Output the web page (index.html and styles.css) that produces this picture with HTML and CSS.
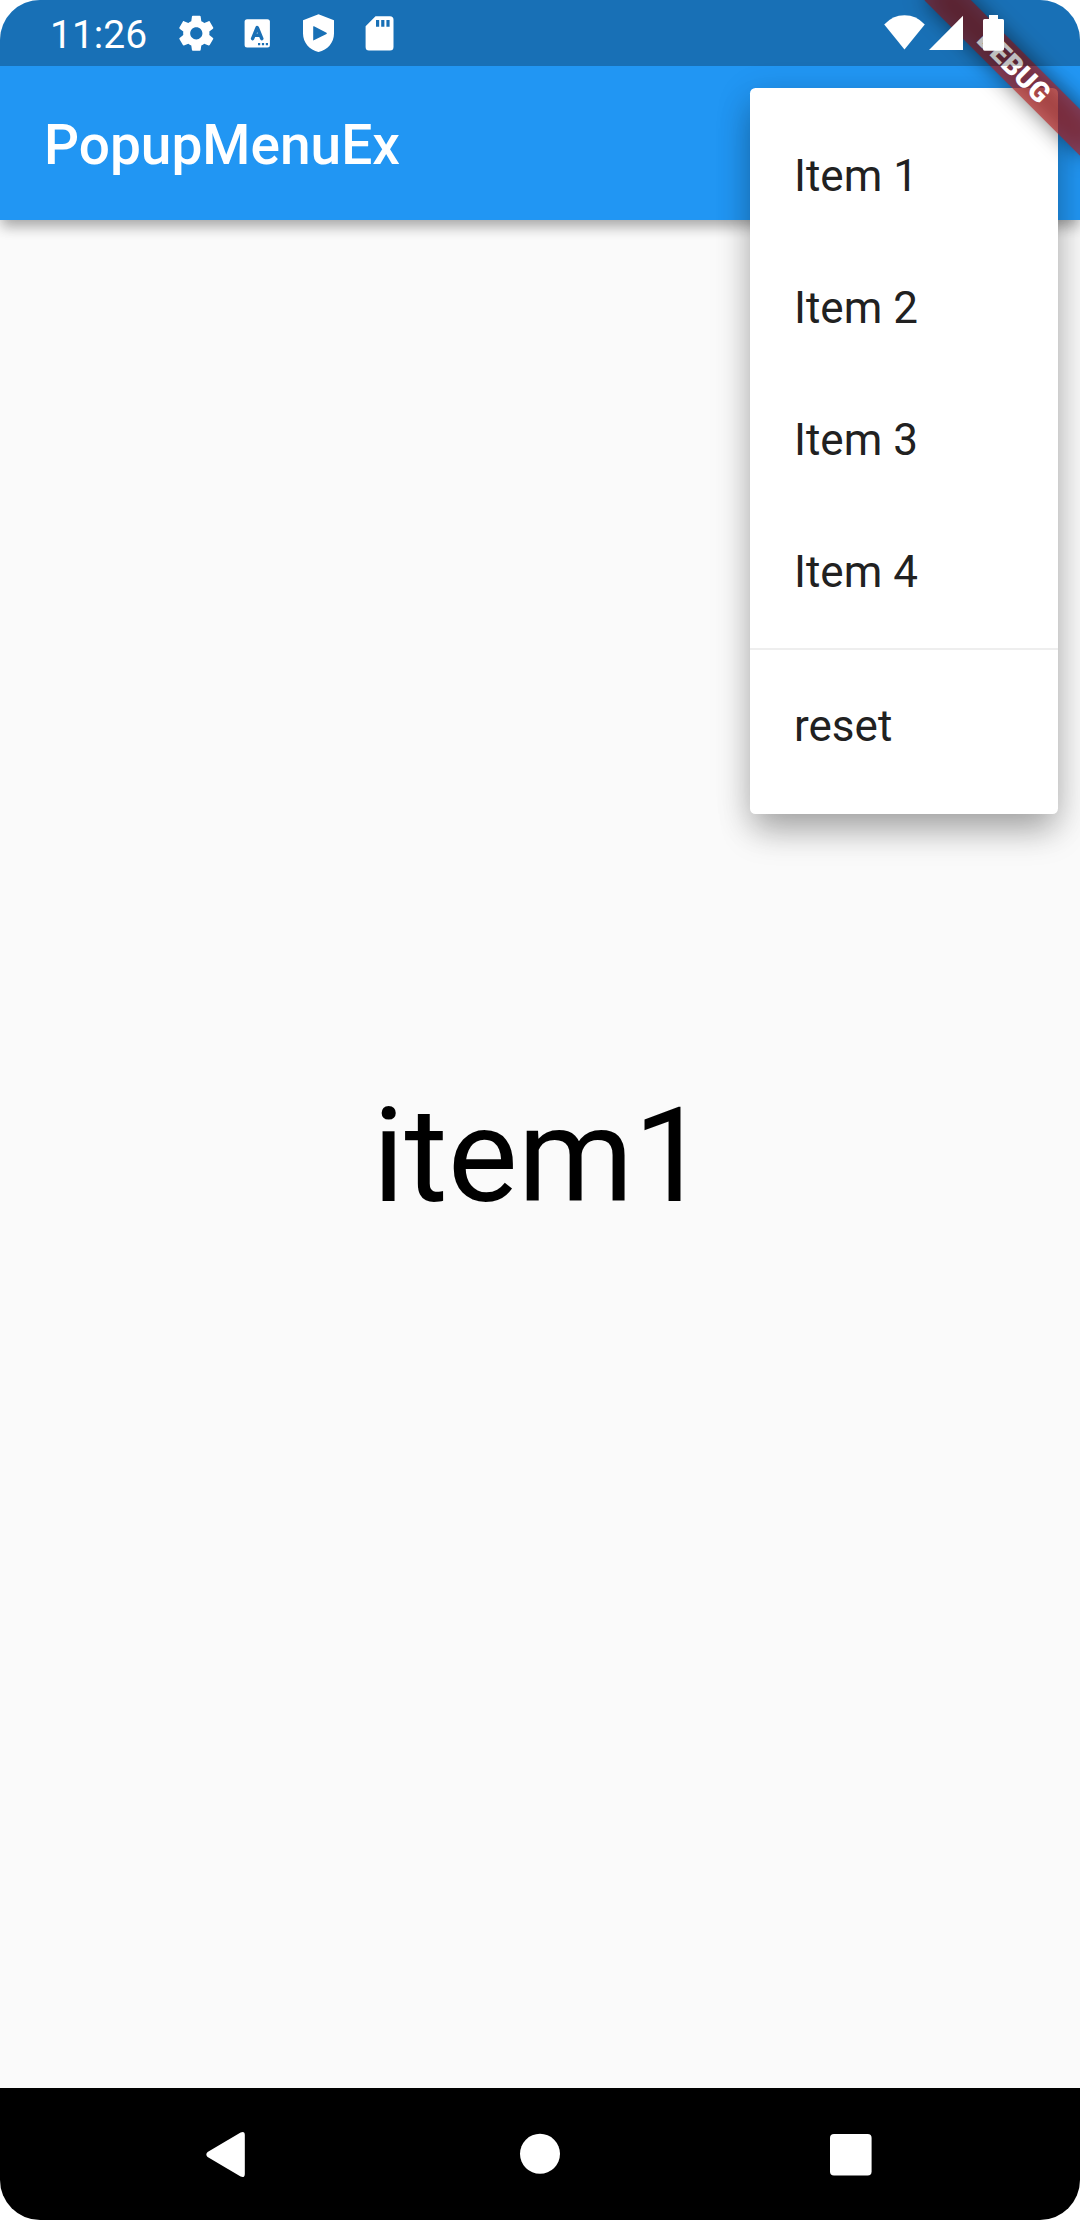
FILE: index.html
```html
<!DOCTYPE html>
<html lang="en">
<head>
<meta charset="utf-8">
<title>PopupMenuEx</title>
<link rel="stylesheet" href="styles.css">
</head>
<body>
<div class="screen">
  <header class="app-bar"><h1 class="app-title">PopupMenuEx</h1></header>
  <main class="content"><p class="selection">item1</p></main>
  <nav class="nav-bar">
    <svg class="nav-icon" viewBox="0 0 60 60"><path d="M7.600 28 40.600 8.600Q44.800 6.800 44.800 11V50Q44.800 54.300 40.600 52.600L7.600 33Q5 30.500 7.600 28Z"/></svg>
    <svg class="nav-icon" viewBox="0 0 60 60"><circle cx="30" cy="29.800" r="20"/></svg>
    <svg class="nav-icon" viewBox="0 0 60 60"><rect x="10" y="10" width="41.600" height="41.600" rx="4"/></svg>
  </nav>

  <div class="menu" role="menu">
    <div class="menu-item" role="menuitem">Item 1</div>
    <div class="menu-item" role="menuitem">Item 2</div>
    <div class="menu-item" role="menuitem">Item 3</div>
    <div class="menu-item" role="menuitem">Item 4</div>
    <div class="menu-divider"></div>
    <div class="menu-item" role="menuitem">reset</div>
  </div>

  <div class="banner">DEBUG</div>

  <div class="status-bar">
    <span class="clock">11:26</span>
    <div class="notifications">
      <svg class="note-icon" viewBox="0 0 42 42"><g transform="translate(.3 .3) scale(1.75)"><path d="M19.430 12.980c.04-.32.07-.64.07-.98s-.03-.66-.07-.98l2.110-1.650c.19-.15.24-.42.12-.64l-2-3.460c-.12-.22-.39-.3-.61-.22l-2.490 1c-.52-.4-1.080-.73-1.690-.98l-.38-2.650C14.460 2.180 14.250 2 14 2h-4c-.25 0-.46.18-.49.42l-.38 2.650c-.61.25-1.170.59-1.690.98l-2.490-1c-.23-.09-.49 0-.61.22l-2 3.460c-.13.22-.07.49.12.64l2.110 1.650c-.04.32-.07.65-.07.98s.03.66.07.98l-2.110 1.650c-.19.15-.24.42-.12.64l2 3.460c.12.22.39.3.61.22l2.490-1c.52.4 1.080.73 1.690.98l.38 2.650c.03.24.24.42.49.42h4c.25 0 .46-.18.49-.42l.38-2.650c.61-.25 1.170-.59 1.690-.98l2.490 1c.23.09.49 0 .61-.22l2-3.460c.12-.22.07-.49-.12-.64l-2.110-1.650zM12 15.500c-1.930 0-3.500-1.570-3.500-3.500s1.570-3.500 3.500-3.500 3.500 1.570 3.500 3.500-1.570 3.500-3.500 3.500z"/></g></svg>
      <svg class="note-icon" viewBox="0 0 42 42"><rect x="8.600" y="7.200" width="25.300" height="28.300" rx="2.500"/><path class="cut-line" d="M16.600 26.600 21.200 15.500 25.800 26.600M18.500 23.200H24"/><path class="cut" d="M22 31h2.200v2.200H22zM25.900 31h2.200v2.200h-2.200zM29.800 31H32v2.200h-2.200z"/></svg>
      <svg class="note-icon" viewBox="0 0 42 42"><path fill-rule="evenodd" d="M21.500 2.300 37 8.200V21.500C37 30.500 30.500 38 21.500 40 12.500 38 6 30.500 6 21.500V8.200ZM16.200 14.400V28.200Q16.200 28.600 16.800 28.300L29.500 22Q30.300 21.300 29.500 20.700L17 14.200Q16.200 14 16.200 14.400Z"/></svg>
      <svg class="note-icon" viewBox="0 0 42 42"><path fill-rule="evenodd" d="M17.500 4.300H32Q35.500 4.300 35.500 7.800V35Q35.500 38.500 32 38.500H11Q7.600 38.500 7.600 35V14.300ZM18 8V14.700H21.200V8ZM23.200 8V14.700H26.400V8ZM28.400 8V14.700H31.600V8Z"/></svg>
    </div>
    <div class="system">
      <svg class="wifi" viewBox="0 0 41 36"><path d="M0.200 9.500Q8.500.2 20.500.2T40.800 9.500L20.500 34.500Z"/></svg>
      <svg class="signal" viewBox="0 0 34 36"><path d="M34 .7V35H0Z"/></svg>
      <svg class="battery" viewBox="0 0 21 36"><path d="M6 0H15V4H19.500Q21 4 21 5.500V34Q21 35.700 19.300 35.700H1.700Q0 35.700 0 34V5.500Q0 4 1.500 4H6Z"/></svg>
    </div>
  </div>
</div>
</body>
</html>
```
FILE: styles.css
```css
body {
  margin: 0;
  background: #fff;
  font-family: Roboto, sans-serif;
}

.screen {
  position: relative;
  display: flex;
  flex-direction: column;
  width: 1080px;
  height: 2220px;
  overflow: hidden;
  border-radius: 40px;
  background: #fafafa;
}

.app-bar {
  z-index: 1;
  box-sizing: border-box;
  display: flex;
  align-items: center;
  height: 220px;
  padding: 70px 44px 0;
  background: #2196f3;
  box-shadow: 0 9px 12px -2px rgba(0, 0, 0, .24), 0 3px 16px rgba(0, 0, 0, .14);
}

.app-title {
  margin: 0;
  color: #fff;
  font-size: 55px;
  font-weight: 500;
  line-height: 64px;
}

.content {
  flex: 1;
  display: flex;
  align-items: center;
  justify-content: center;
  padding-top: 4px;
}

.selection {
  margin: 0;
  color: #000;
  font-size: 132px;
  line-height: 155px;
}

.nav-bar {
  display: flex;
  align-items: center;
  justify-content: center;
  gap: 250px;
  height: 132px;
  background: #000;
}

.nav-icon {
  width: 60px;
  height: 60px;
  fill: #fff;
}

/* Popup menu, floating over the app bar and the content */
.menu {
  position: absolute;
  z-index: 2;
  top: 88px;
  right: 22px;
  box-sizing: border-box;
  width: 308px;
  padding: 22px 0;
  border-radius: 5.5px;
  background: #fff;
  box-shadow: 0 20px 34px -4px rgba(0, 0, 0, .26), 0 8px 36px rgba(0, 0, 0, .16);
}

.menu-item {
  display: flex;
  align-items: center;
  height: 132px;
  padding: 0 44px;
  color: #212121;
  font-size: 44px;
}

.menu-divider {
  height: 2px;
  margin: 10px 0;
  background: #eee;
}

/* Ribbon across the top right corner */
.banner {
  position: absolute;
  z-index: 3;
  top: 50px;
  left: 904px;
  width: 220px;
  height: 33px;
  transform: rotate(45deg);
  color: #fff;
  font-size: 28.05px;
  font-weight: 900;
  line-height: 33px;
  text-align: center;
}

.banner::before,
.banner::after {
  content: "";
  position: absolute;
  inset: 0;
}

.banner::before {
  z-index: -2;
  background: rgba(0, 0, 0, .5);
  filter: blur(10.900px);
}

.banner::after {
  z-index: -1;
  background: rgba(183, 28, 28, .627);
}

.status-bar {
  position: absolute;
  z-index: 4;
  top: 0;
  left: 0;
  box-sizing: border-box;
  display: flex;
  align-items: center;
  width: 100%;
  height: 66px;
  padding: 0 76px 0 50px;
  background: rgba(0, 0, 0, .25);
  color: #fff;
  fill: #fff;
}

.clock {
  width: 125px;
  padding-top: 3px;
  font-size: 39px;
  line-height: 46px;
}

.notifications {
  display: flex;
  gap: 19px;
}

.note-icon {
  width: 42px;
  height: 42px;
}

.cut {
  fill: #1a70b6;
}

.cut-line {
  fill: none;
  stroke: #1a70b6;
  stroke-width: 3.500;
  stroke-linecap: round;
  stroke-linejoin: round;
}

.system {
  display: flex;
  margin-left: auto;
}

.wifi {
  width: 41px;
  height: 36px;
}

.signal {
  width: 34px;
  height: 36px;
  margin: 0 20px 0 4px;
}

.battery {
  width: 21px;
  height: 36px;
}
```
